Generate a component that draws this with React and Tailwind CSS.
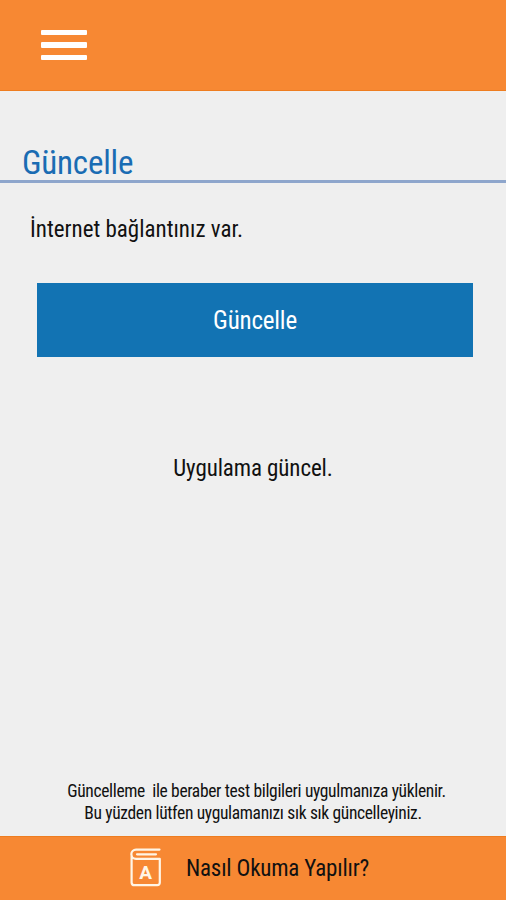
function BookIcon() {
  return (
    <svg
      width="32"
      height="40"
      viewBox="0 0 32 40"
      fill="none"
      stroke="#fff5e6"
      strokeWidth="2.2"
      strokeLinecap="round"
      strokeLinejoin="round"
    >
      <path d="M29.500 1.600H6a4.600 4.600 0 0 0 0 9.300h23.800V34.600a2.600 2.600 0 0 1-2.600 2.600H4.400A2.800 2.800 0 0 1 1.600 34.600V7" />
      <path d="M7 6.300H26" />
      <text
        x="15.700"
        y="31"
        textAnchor="middle"
        fill="#fff5e6"
        stroke="none"
        className="font-['Roboto',sans-serif] text-[19px] font-bold [font-stretch:90%]"
      >
        A
      </text>
    </svg>
  );
}

export default function App() {
  return (
    <div className="flex h-[900px] w-[506px] flex-col overflow-hidden bg-[#efefef] font-['Roboto_Condensed','Roboto',sans-serif] text-[#111] [font-stretch:75%]">
      <header className="flex h-[91px] shrink-0 items-center border-b border-[#ee7d20] bg-[#f78833] pl-[41px]">
        <button type="button" aria-label="Menü" className="flex flex-col gap-[7px]">
          <span className="h-[5.500px] w-[46px] rounded-[1px] bg-white" />
          <span className="h-[5.500px] w-[46px] rounded-[1px] bg-white" />
          <span className="h-[5.500px] w-[46px] rounded-[1px] bg-white" />
        </button>
      </header>

      <main className="flex flex-1 flex-col">
        <div className="flex h-[92px] items-end border-b-[3px] border-[#8ea6cc] pl-[22px]">
          <h1 className="whitespace-nowrap text-[33px] leading-[35px] tracking-[-0.2px] text-[#1a6cb3]">
            Güncelle
          </h1>
        </div>

        <p className="mt-[33px] self-start whitespace-nowrap pl-[30px] text-[23px] leading-[28px]">
          İnternet bağlantınız var.
        </p>

        <button
          type="button"
          className="mt-[39px] ml-[37px] flex h-[74px] w-[436px] items-center justify-center bg-[#1273b3] pt-[2px] text-[25px] tracking-[-0.2px] text-white"
        >
          <span>Güncelle</span>
        </button>

        <p className="mt-[98px] self-center whitespace-nowrap text-[23px] leading-[28px] tracking-[-0.1px]">
          Uygulama güncel.
        </p>

        <div className="mt-auto mb-[12px] flex flex-col items-center text-[17.500px] leading-[22px] tracking-[-0.35px]">
          <p className="whitespace-pre pl-[7px]">Güncelleme  ile beraber test bilgileri uygulmanıza yüklenir.</p>
          <p className="whitespace-pre">Bu yüzden lütfen uygulamanızı sık sık güncelleyiniz.</p>
        </div>
      </main>

      <footer className="flex h-[64px] shrink-0 items-center border-t border-[#ee7d20] bg-[#f78833] pb-[2px] pl-[130px]">
        <BookIcon />
        <span className="ml-[24px] whitespace-nowrap pt-[3px] text-[23px] tracking-[-0.2px]">Nasıl Okuma Yapılır?</span>
      </footer>
    </div>
  );
}
